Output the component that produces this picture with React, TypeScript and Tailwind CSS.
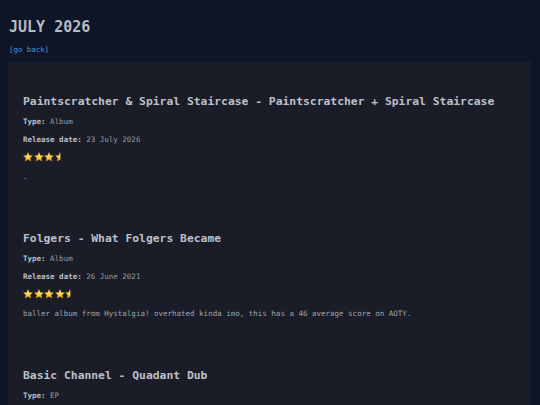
import React from 'react';

type Release = {
  title: string;
  type: string;
  date: string;
  rating: number;
  note: string;
};

const RELEASES: Release[] = [
  {
    title: 'Paintscratcher & Spiral Staircase - Paintscratcher + Spiral Staircase',
    type: 'Album',
    date: '23 July 2026',
    rating: 3.5,
    note: '.',
  },
  {
    title: 'Folgers - What Folgers Became',
    type: 'Album',
    date: '26 June 2021',
    rating: 4.5,
    note: 'baller album from Hystalgia! overhated kinda imo, this has a 46 average score on AOTY.',
  },
  {
    title: 'Basic Channel - Quadant Dub',
    type: 'EP',
    date: '1 July 1994',
    rating: 4,
    note: 'dub techno classic.',
  },
];

const STAR = 'M5 0.6 L6.35 3.45 L9.45 3.8 L7.15 5.9 L7.8 9 L5 7.4 L2.2 9 L2.85 5.9 L0.55 3.8 L3.65 3.45 Z';

function Star({ half, id }: { half?: boolean; id: string }) {
  return (
    <svg width="10" height="10" viewBox="0 0 10 10" className="block">
      <defs>
        <linearGradient id={`g${id}`} x1="0" y1="0" x2="0" y2="1">
          <stop offset="0" stopColor="#fff3a8" />
          <stop offset="0.55" stopColor="#fcd34d" />
          <stop offset="1" stopColor="#e0a020" />
        </linearGradient>
        <clipPath id={`c${id}`}>
          <rect x="0" y="0" width={half ? 5.4 : 10} height="10" />
        </clipPath>
      </defs>
      <path d={STAR} fill={`url(#g${id})`} stroke="#c98a12" strokeWidth="0.5" strokeLinejoin="round" clipPath={`url(#c${id})`} />
    </svg>
  );
}

function Stars({ rating, k }: { rating: number; k: number }) {
  const full = Math.floor(rating);
  const half = rating - full >= 0.5;
  return (
    <div className="flex items-center gap-[0.5px] h-[10px] mt-[7px]">
      {Array.from({ length: full }).map((_, i) => (
        <Star key={i} id={`${k}-${i}`} />
      ))}
      {half && <Star half id={`${k}-h`} />}
    </div>
  );
}

function Item({ r, k }: { r: Release; k: number }) {
  return (
    <div>
      <h2 className="text-[11.35px] leading-[14px] font-bold text-[#bcc0c8] whitespace-nowrap">{r.title}</h2>
      <p className="mt-[9px] text-[7.5px] leading-[10px] text-[#979ba3]">
        <span className="font-bold text-[#bcc0c8]">Type:</span> {r.type}
      </p>
      <p className="mt-[8px] text-[7.5px] leading-[10px] text-[#979ba3]">
        <span className="font-bold text-[#bcc0c8]">Release date:</span> {r.date}
      </p>
      <Stars rating={r.rating} k={k} />
      <p className="mt-[10px] text-[7.5px] leading-[10px] text-[#a0a4ab]">{r.note}</p>
    </div>
  );
}

export default function App() {
  return (
    <div
      className="min-h-screen bg-[#0d1526] px-[8px] pb-8"
      style={{ fontFamily: '"DejaVu Sans Mono", "Liberation Mono", monospace' }}
    >
      <h1 className="pt-[18px] text-[15px] leading-[18px] font-bold text-[#b5bac4] pl-[1px]">JULY 2026</h1>
      <a href="#" className="block mt-[9px] text-[7.4px] leading-[10px] text-[#4f95d0] pl-[1px]">[go back]</a>
      <main className="mt-[7px] w-[523px] bg-[#1a1d28] pl-[15px] pr-[14px] pt-[32px] pb-[40px] flex flex-col gap-[49px]">
        {RELEASES.map((r, i) => (
          <Item key={i} r={r} k={i} />
        ))}
      </main>
    </div>
  );
}
